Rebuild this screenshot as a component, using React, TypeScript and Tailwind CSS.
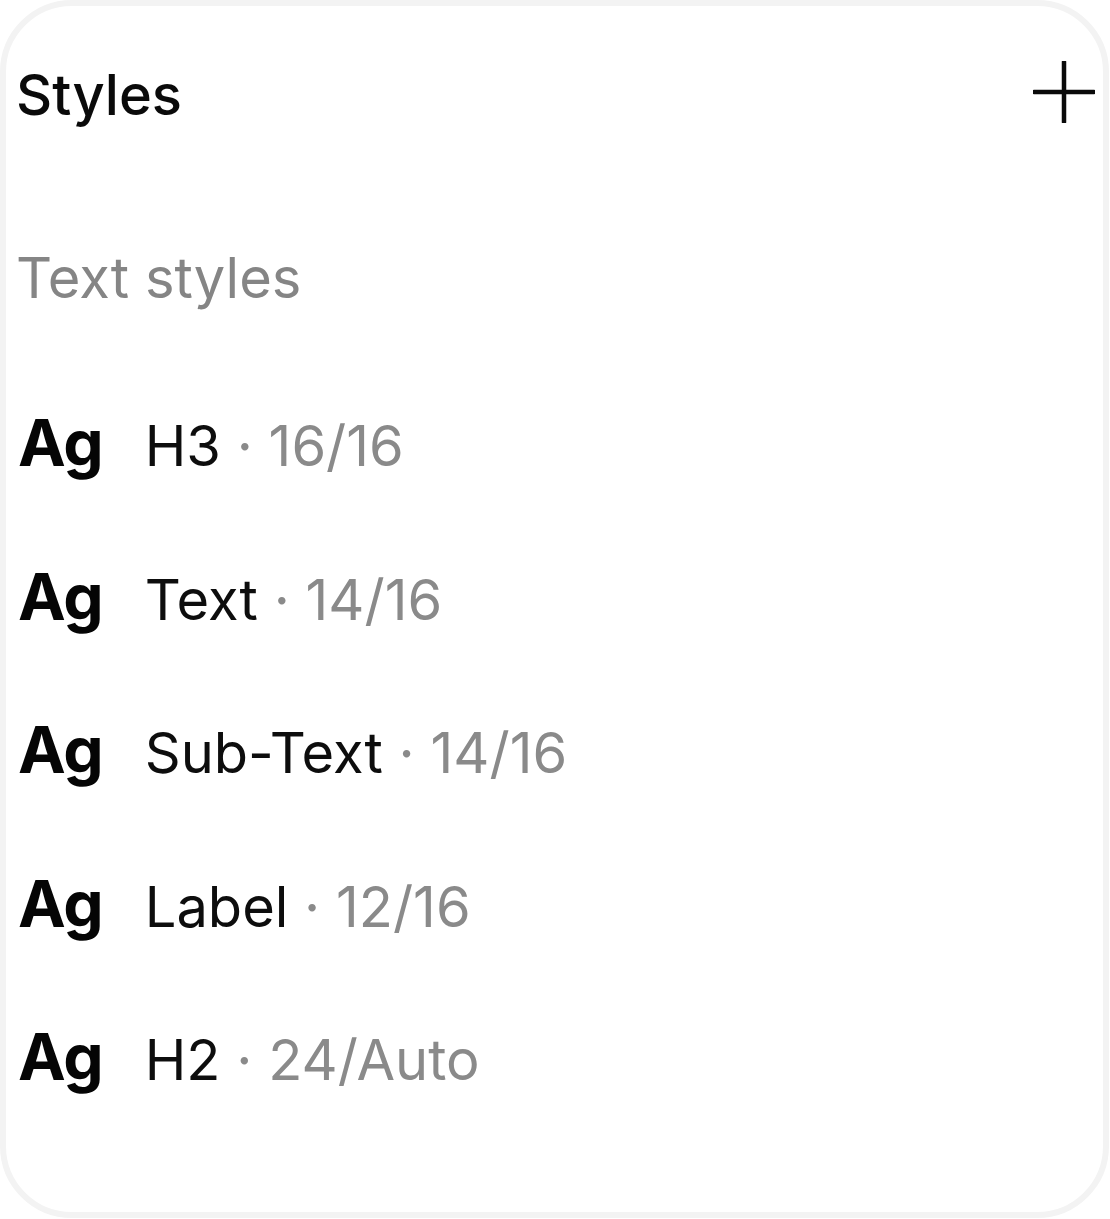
import React from "react";

type TextStyle = {
  name: string;
  spec: string;
};

const textStyles: TextStyle[] = [
  { name: "H3", spec: "16/16" },
  { name: "Text", spec: "14/16" },
  { name: "Sub-Text", spec: "14/16" },
  { name: "Label", spec: "12/16" },
  { name: "H2", spec: "24/Auto" },
];

function PlusIcon() {
  return (
    <svg width="62" height="62" viewBox="0 0 62 62" fill="none" className="-mt-[2px]">
      <path d="M31 1V61M1 31H61" stroke="#0a0a0a" strokeWidth="4.5" strokeLinecap="round" />
    </svg>
  );
}

function StyleRow({ item }: { item: TextStyle }) {
  return (
    <div className="flex items-baseline gap-[42px] h-[64px]">
      <span className="text-[64px] leading-[64px] font-bold tracking-[-1px] text-[#050505]">Ag</span>
      <span className="text-[56px] leading-[64px] text-[#0d0d0d]">
        {item.name}
        <span className="text-[#8a8a8a]"> · {item.spec}</span>
      </span>
    </div>
  );
}

export default function App() {
  return (
    <div className="w-[1110px] h-[1219px] bg-white font-['Inter',sans-serif]">
      <div className="w-[1109px] h-[1218px] border-[6px] border-[#f3f3f3] rounded-[72px] pl-[10px] pr-[8px] pt-[57px]">
        <div className="flex items-start justify-between">
          <h2 className="text-[56px] leading-[64px] font-medium text-[#0a0a0a]">Styles</h2>
          <PlusIcon />
        </div>
        <p className="mt-[119px] text-[56px] leading-[64px] text-[#858585]">Text styles</p>
        <div className="mt-[101px] pl-[2px] flex flex-col gap-[89.5px]">
          {textStyles.map((item) => (
            <StyleRow key={item.name} item={item} />
          ))}
        </div>
      </div>
    </div>
  );
}
